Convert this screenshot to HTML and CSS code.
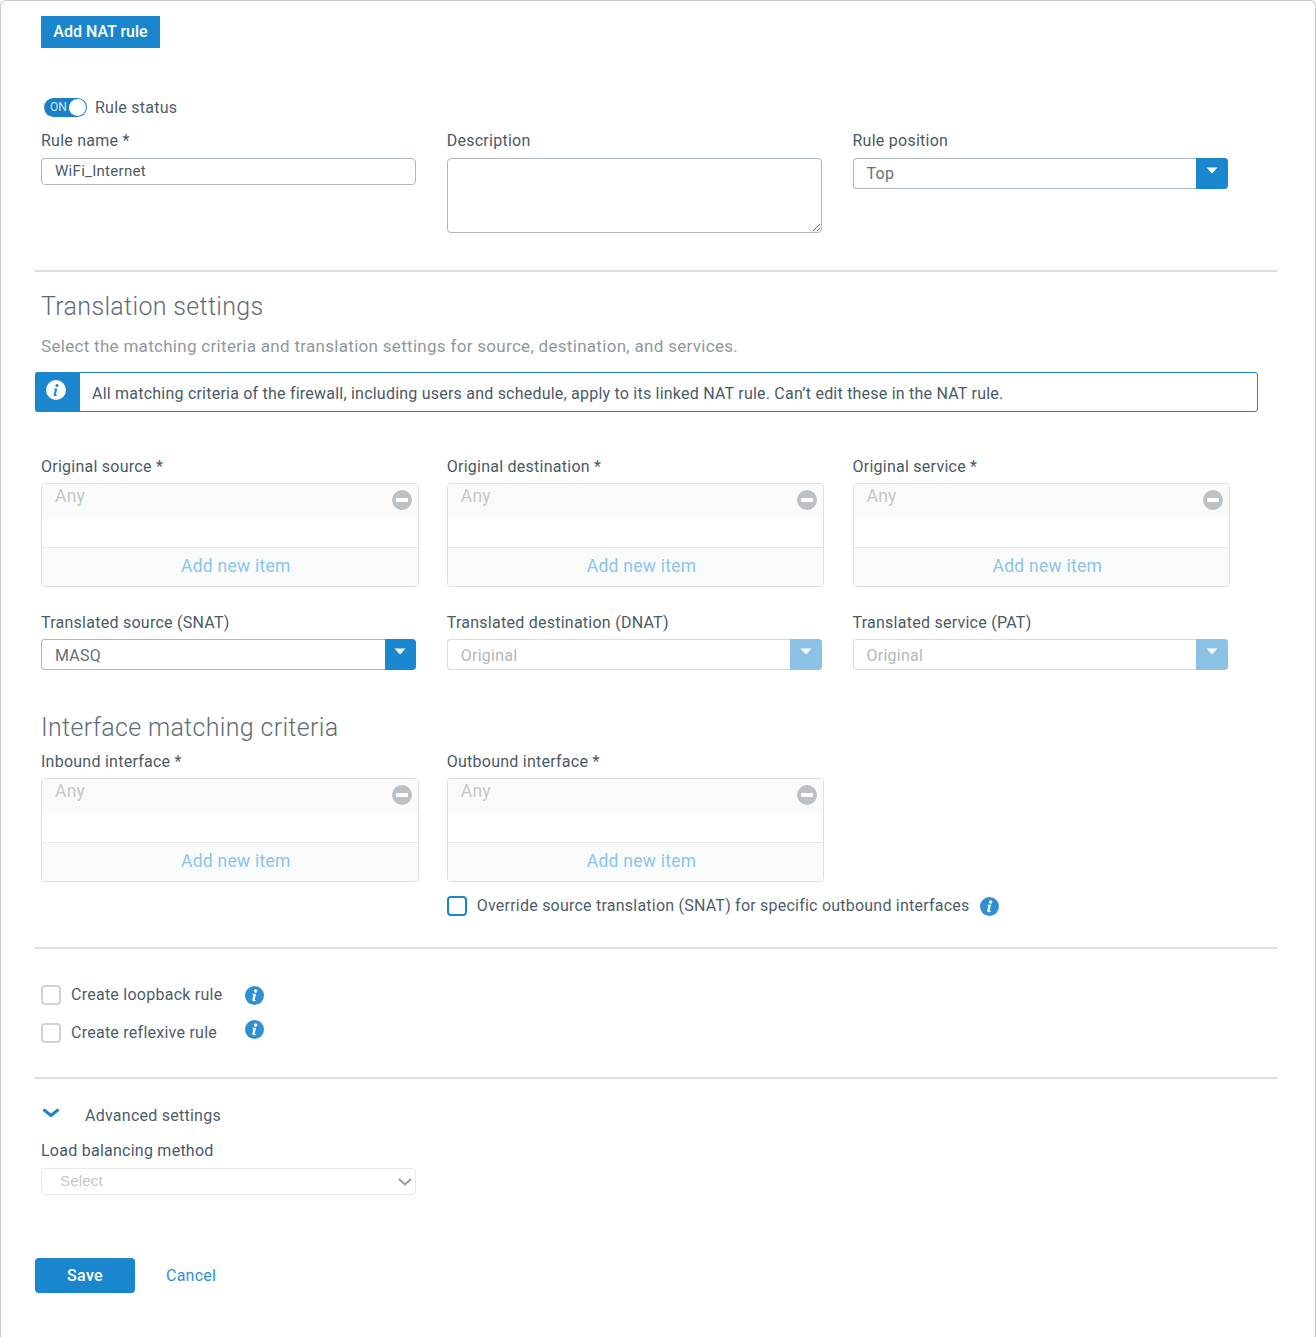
FILE: index.html
```html
<!DOCTYPE html>
<html lang="en">
<head>
<meta charset="utf-8">
<title>Add NAT rule</title>
<link rel="stylesheet" href="styles.css">
</head>
<body>
<main class="frame">
  <div class="page-title">Add NAT rule</div>

  <div class="status-row">
    <span class="toggle"><span class="toggle-text">ON</span><span class="toggle-knob"></span></span>
    <span class="status-label">Rule status</span>
  </div>

  <section class="grid general">
    <div class="field">
      <label class="label">Rule name *</label>
      <input class="text-input" type="text" value="WiFi_Internet">
    </div>
    <div class="field">
      <label class="label">Description</label>
      <textarea class="text-area"></textarea>
    </div>
    <div class="field">
      <label class="label">Rule position</label>
      <div class="combo"><span class="combo-value">Top</span><span class="combo-btn"><svg width="12" height="7" viewBox="0 0 12 7"><path d="M0.5 0.5h11L6 6.5z" fill="#fff"/></svg></span></div>
    </div>
  </section>

  <hr class="rule rule-first">

  <h2 class="heading">Translation settings</h2>
  <p class="hint">Select the matching criteria and translation settings for source, destination, and services.</p>

  <div class="notice">
    <span class="notice-icon">
      <svg width="20" height="20" viewBox="0 0 20 20"><circle cx="10" cy="10" r="10" fill="#fff"/><circle cx="11" cy="5.4" r="1.5" fill="#1a86cd"/><path d="M8.2 8.4h3.1l-1.5 6.1c-.1.4.2.5 1.3.1l-.1.8c-1.8.8-3.6.8-3.2-1l1.2-5h-1z" fill="#1a86cd"/></svg>
    </span>
    <span class="notice-text">All matching criteria of the firewall, including users and schedule, apply to its linked NAT rule. Can’t edit these in the NAT rule.</span>
  </div>

  <section class="grid originals">
    <div class="field">
      <label class="label">Original source *</label>
      <div class="picker">
        <div class="picker-item"><span>Any</span><span class="remove"></span></div>
        <div class="picker-add">Add new item</div>
      </div>
    </div>
    <div class="field">
      <label class="label">Original destination *</label>
      <div class="picker">
        <div class="picker-item"><span>Any</span><span class="remove"></span></div>
        <div class="picker-add">Add new item</div>
      </div>
    </div>
    <div class="field">
      <label class="label">Original service *</label>
      <div class="picker">
        <div class="picker-item"><span>Any</span><span class="remove"></span></div>
        <div class="picker-add">Add new item</div>
      </div>
    </div>
  </section>

  <section class="grid translated">
    <div class="field">
      <label class="label">Translated source (SNAT)</label>
      <div class="combo"><span class="combo-value">MASQ</span><span class="combo-btn"><svg width="12" height="7" viewBox="0 0 12 7"><path d="M0.5 0.5h11L6 6.5z" fill="#fff"/></svg></span></div>
    </div>
    <div class="field">
      <label class="label">Translated destination (DNAT)</label>
      <div class="combo is-disabled"><span class="combo-value">Original</span><span class="combo-btn"><svg width="12" height="7" viewBox="0 0 12 7"><path d="M0.5 0.5h11L6 6.5z" fill="#fff"/></svg></span></div>
    </div>
    <div class="field">
      <label class="label">Translated service (PAT)</label>
      <div class="combo is-disabled"><span class="combo-value">Original</span><span class="combo-btn"><svg width="12" height="7" viewBox="0 0 12 7"><path d="M0.5 0.5h11L6 6.5z" fill="#fff"/></svg></span></div>
    </div>
  </section>

  <h2 class="heading heading-iface">Interface matching criteria</h2>

  <section class="grid interfaces">
    <div class="field">
      <label class="label">Inbound interface *</label>
      <div class="picker">
        <div class="picker-item"><span>Any</span><span class="remove"></span></div>
        <div class="picker-add">Add new item</div>
      </div>
    </div>
    <div class="field">
      <label class="label">Outbound interface *</label>
      <div class="picker">
        <div class="picker-item"><span>Any</span><span class="remove"></span></div>
        <div class="picker-add">Add new item</div>
      </div>
      <div class="override">
        <input class="check check-blue" type="checkbox">
        <span class="check-label">Override source translation (SNAT) for specific outbound interfaces</span>
        <svg class="info" width="19" height="19" viewBox="0 0 20 20"><circle cx="10" cy="10" r="10" fill="#2e8fd3"/><circle cx="11.2" cy="5.2" r="1.8" fill="#fff"/><path d="M8 8.2h3.7l-1.6 6.2c-.1.4.2.5 1.3.1l-.1.9c-2 .9-4 .9-3.6-1.1l1.2-5.1h-1z" fill="#fff"/></svg>
      </div>
    </div>
  </section>

  <hr class="rule rule-second">

  <div class="options">
    <div class="option">
      <input class="check" type="checkbox">
      <span class="option-label">Create loopback rule</span>
      <svg class="info" width="19" height="19" viewBox="0 0 20 20"><circle cx="10" cy="10" r="10" fill="#2e8fd3"/><circle cx="11.2" cy="5.2" r="1.8" fill="#fff"/><path d="M8 8.2h3.7l-1.6 6.2c-.1.4.2.5 1.3.1l-.1.9c-2 .9-4 .9-3.6-1.1l1.2-5.1h-1z" fill="#fff"/></svg>
    </div>
    <div class="option">
      <input class="check" type="checkbox">
      <span class="option-label">Create reflexive rule</span>
      <svg class="info info-raised" width="19" height="19" viewBox="0 0 20 20"><circle cx="10" cy="10" r="10" fill="#2e8fd3"/><circle cx="11.2" cy="5.2" r="1.8" fill="#fff"/><path d="M8 8.2h3.7l-1.6 6.2c-.1.4.2.5 1.3.1l-.1.9c-2 .9-4 .9-3.6-1.1l1.2-5.1h-1z" fill="#fff"/></svg>
    </div>
  </div>

  <hr class="rule rule-third">

  <div class="advanced">
    <svg class="chevron" width="18" height="10" viewBox="0 0 18 10"><path d="M1.5 1.5L9 7.5l7.5-6" fill="none" stroke="#1a86cd" stroke-width="3"/></svg>
    <span class="advanced-label">Advanced settings</span>
  </div>

  <section class="grid balancing">
    <div class="field">
      <label class="label">Load balancing method</label>
      <div class="select-wrap">
        <select class="native-select" disabled><option>Select</option></select>
        <svg class="select-arrow" width="14" height="8" viewBox="0 0 14 8"><path d="M1 1l6 5.5L13 1" fill="none" stroke="#959ca2" stroke-width="2"/></svg>
      </div>
    </div>
  </section>

  <div class="actions">
    <button class="btn-save" type="button">Save</button>
    <a class="btn-cancel" href="#">Cancel</a>
  </div>
</main>
</body>
</html>
```

FILE: styles.css
```css
* { box-sizing: border-box; }

html, body { margin: 0; padding: 0; }

body {
  background: #fff;
  color: #4a5a68;
  font-family: Roboto, "Liberation Sans", sans-serif;
  font-size: 16px;
  line-height: 20px;
  letter-spacing: 0.25px;
}

.frame {
  height: 1337px;
  padding: 16px 38px 0 34px;
  border: 1px solid #c8c8c8;
  border-bottom: 0;
  border-radius: 6px 6px 0 0;
  overflow: hidden;
}

.page-title {
  width: 119px;
  height: 32px;
  margin-left: 6px;
  margin-top: -1px;
  background: #1a86cd;
  color: #fff;
  font-weight: 500;
  line-height: 32px;
  text-align: center;
  letter-spacing: 0;
}

.status-row {
  display: flex;
  align-items: center;
  height: 20px;
  margin: 50px 0 0 9px;
  gap: 8px;
}

.status-label { color: #4f5d6a; }

.toggle {
  position: relative;
  align-self: flex-start;
  width: 43px;
  height: 19px;
  border-radius: 10px;
  background: #1a7fc4;
  display: block;
}

.toggle-text {
  position: absolute;
  left: 6px;
  top: 0;
  color: #d5e8f6;
  font-size: 12px;
  line-height: 19px;
  letter-spacing: 0;
}

.toggle-knob {
  position: absolute;
  right: 1px;
  top: 1px;
  width: 17px;
  height: 17px;
  border-radius: 50%;
  background: #fff;
}

.grid {
  display: grid;
  grid-template-columns: 375px 375px 375px;
  column-gap: 30.75px;
  margin-left: 6px;
}

.field { min-width: 0; }

.label {
  display: block;
  height: 20px;
  color: #4a5a68;
}

.general { margin-top: 13px; height: 102px; }
.general .label { margin-bottom: 7px; }

.text-input {
  display: block;
  width: 375px;
  height: 27px;
  padding: 0 13px 2px;
  border: 1px solid #aeb6bd;
  border-radius: 4px;
  background: #fff;
  color: #4a5a68;
  font: 15px Roboto, sans-serif;
  letter-spacing: 0.3px;
}

.text-area {
  display: block;
  width: 375px;
  height: 75px;
  border: 1px solid #aeb6bd;
  border-radius: 4px;
  background: #fff;
}

.combo {
  display: flex;
  width: 375px;
  height: 31px;
  border: 1px solid #aeb6bd;
  border-right: 0;
  border-radius: 4px;
  background: #fff;
}

.combo-value {
  flex: 1;
  padding-left: 13px;
  line-height: 29px;
  color: #666f77;
}

.translated .combo-value { line-height: 31px; }

.combo-btn {
  display: flex;
  justify-content: center;
  width: 31.5px;
  height: 31px;
  margin-top: -1px;
  padding-top: 9px;
  background: #1a86cd;
  border-radius: 0 4px 4px 0;
}

.combo-btn svg { display: block; }

.is-disabled { border-color: #dadada; }
.is-disabled .combo-value { color: #b3b7ba; }
.is-disabled .combo-btn { background: #8cc2e6; }

.rule {
  width: 1242px;
  height: 2px;
  margin: 0;
  border: 0;
  background: #d9dde0;
}

.rule-first { margin-top: 37px; }
.rule-second { margin-top: 26px; }
.rule-third { margin-top: 0; }

.heading {
  margin: 0 0 0 6px;
  color: #5f6b76;
  font-size: 25px;
  font-weight: 300;
  line-height: 30px;
  letter-spacing: 0.33px;
}

.rule-first + .heading { margin-top: 20px; }

.heading-iface { margin-top: 43px; }

.hint {
  margin: 14px 0 0 6px;
  color: #8f989f;
  font-size: 17px;
  letter-spacing: 0.3px;
}

.notice {
  display: flex;
  width: 1223px;
  height: 40px;
  margin-top: 16px;
  border: 1px solid #1a86cd;
  border-radius: 3px;
}

.notice-icon {
  display: block;
  width: 45px;
  margin: -1px 0 -1px -1px;
  padding: 8px 0 0 11px;
  background: #1a86cd;
  border-radius: 3px 0 0 3px;
}

.notice-icon svg { display: block; }

.notice-text {
  padding-left: 12px;
  line-height: 40px;
  padding-top: 1px;
  color: #4a5a68;
  letter-spacing: 0.22px;
}

.originals { margin-top: 45px; }
.originals .label, .interfaces .label { margin-bottom: 6px; }

.picker {
  width: 377.5px;
  height: 104px;
  border: 1px solid #dadfe3;
  border-radius: 4px;
  overflow: hidden;
}

.picker-item {
  display: flex;
  justify-content: space-between;
  height: 63px;
  padding: 2px 6px 0 13px;
  background: linear-gradient(#fafafa 34px, #fff 34px);
  color: #c4c8cb;
  font-size: 17.5px;
}

.remove {
  position: relative;
  width: 20px;
  height: 20px;
  margin-top: 4px;
  border-radius: 50%;
  background: #bcc1c5;
}

.remove::after {
  content: "";
  position: absolute;
  left: 4px;
  top: 8px;
  width: 12px;
  height: 4px;
  border-radius: 1px;
  background: #fff;
}

.picker-add {
  height: 39px;
  padding-left: 12px;
  border-top: 1px solid #e6e9eb;
  background: #f9fafa;
  color: #8cc5ea;
  font-size: 17.5px;
  line-height: 36px;
  text-align: center;
}

.translated { margin-top: 26px; }
.translated .label { margin-bottom: 6px; }

.interfaces { margin-top: 9px; height: 169px; }

.override {
  display: flex;
  align-items: center;
  width: 700px;
  height: 20px;
  margin-top: 14px;
}

.check {
  appearance: none;
  flex: none;
  display: block;
  width: 20px;
  height: 20px;
  margin: 0;
  border: 2px solid #cfd3d6;
  border-radius: 4px;
  background: #fff;
}

.check-blue { border-color: #1a86cd; }

.check-label {
  margin-left: 10px;
  color: #4f5d6a;
  letter-spacing: 0.225px;
}

.override .info { margin-left: 10px; }

.options { margin: 36px 0 0 6px; height: 92px; }

.option {
  position: relative;
  display: flex;
  align-items: center;
  height: 20px;
  margin-bottom: 18px;
}

.option-label {
  width: 174px;
  margin-left: 10px;
  color: #4f5d6a;
}

.info-raised { position: relative; top: -4px; }

.advanced {
  display: flex;
  align-items: center;
  height: 20px;
  margin: 27px 0 0 7px;
}

.chevron { margin-top: -7px; }

.advanced-label {
  margin-left: 25px;
  color: #4f5d6a;
}

.balancing { margin-top: 15px; }
.balancing .label { margin-bottom: 7px; }

.select-wrap { position: relative; width: 375px; }

.native-select {
  display: block;
  width: 375px;
  height: 27px;
  padding: 0 0 2px 18px;
  border: 1px solid #dadfe3;
  border-radius: 4px;
  background: #fff;
  color: #a9b0b6;
  font: 15px "Liberation Sans", sans-serif;
  letter-spacing: 0.2px;
  appearance: none;
}

.select-arrow {
  position: absolute;
  right: 4px;
  top: 10px;
}

.actions {
  display: flex;
  align-items: center;
  margin-top: 63px;
}

.btn-save {
  width: 100px;
  height: 35px;
  padding: 0;
  border: 0;
  border-radius: 4px;
  background: #1a86cd;
  color: #fff;
  font: 500 16px/35px Roboto, sans-serif;
  letter-spacing: 0.3px;
}

.btn-cancel {
  margin-left: 31px;
  color: #2e8fd3;
  text-decoration: none;
}
```
